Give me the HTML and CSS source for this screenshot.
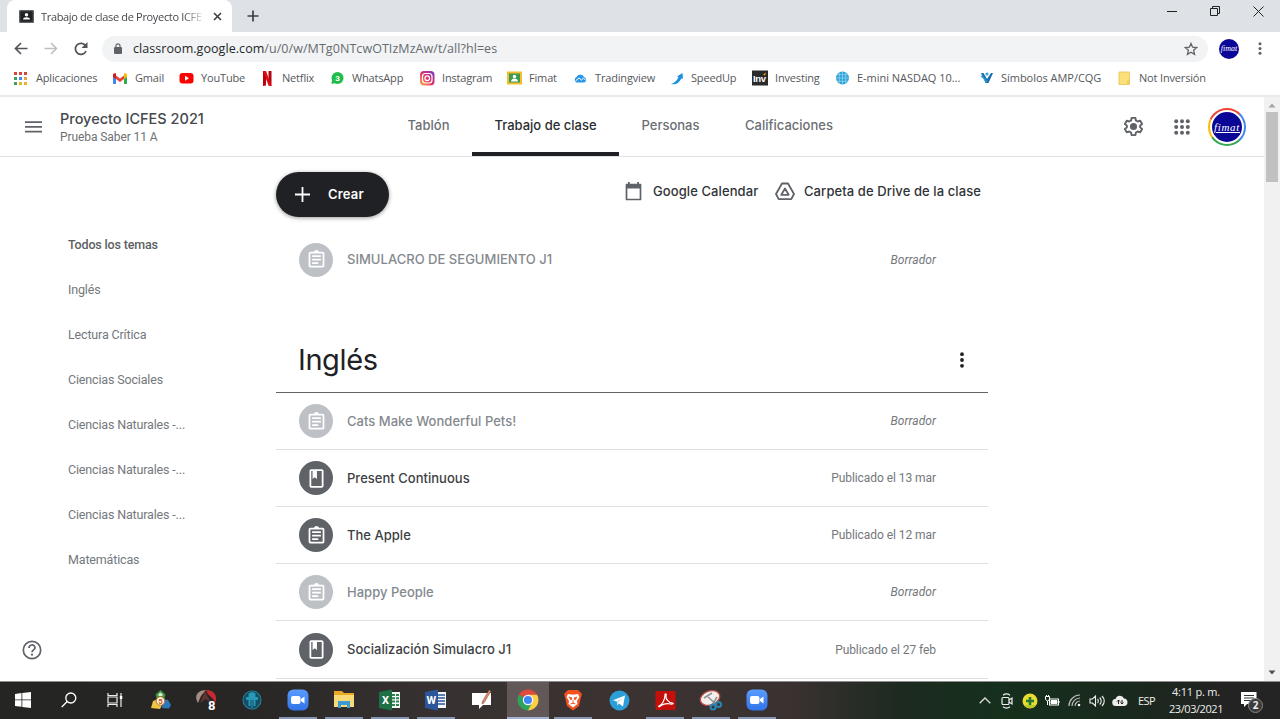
FILE: index.html
```html
<!DOCTYPE html>
<html lang="es">
<head>
<meta charset="utf-8">
<title>Trabajo de clase de Proyecto ICFES 2021</title>
<link rel="stylesheet" href="styles.css">
</head>
<body>
<svg width="0" height="0" class="defs">
  <defs>
    <linearGradient id="ig" x1="0" y1="1" x2="1" y2="0"><stop offset="0" stop-color="#fcb045"/><stop offset=".5" stop-color="#e1306c"/><stop offset="1" stop-color="#6a3ccf"/></linearGradient>
    <linearGradient id="zm" x1="0" y1="0" x2="0" y2="1"><stop offset="0" stop-color="#5a9cff"/><stop offset="1" stop-color="#2f73e8"/></linearGradient>
    <symbol id="assignment" viewBox="0 0 24 24"><path d="M7 15h7v2H7zm0-4h10v2H7zm0-4h10v2H7zm12-4h-4.180C14.400 1.840 13.300 1 12 1c-1.300 0-2.400.840-2.820 2H5c-1.100 0-2 .9-2 2v14c0 1.100.9 2 2 2h14c1.100 0 2-.9 2-2V5c0-1.100-.9-2-2-2zm0 16H5V5h14v14z"/></symbol>
    <symbol id="book" viewBox="0 0 24 24"><path fill-rule="evenodd" d="M18 1.500H6c-1.100 0-2 .9-2 2v17c0 1.100.9 2 2 2h12c1.100 0 2-.9 2-2v-17c0-1.100-.9-2-2-2zM6 3.500h1.500v9l2.500-2 2.500 2v-9H18v17H6z"/></symbol>
    <symbol id="zoomapp" viewBox="0 0 22 22"><rect x=".5" y=".5" width="21" height="21" rx="6" fill="url(#zm)"/><rect x="4" y="7" width="9.500" height="8" rx="2" fill="#fff"/><path d="M14 10l3.500-2.500v7L14 12z" fill="#fff"/></symbol>
  </defs>
</svg>

<div class="tabstrip">
  <div class="tab">
    <svg width="15" height="13" viewBox="0 0 15 13"><rect width="15" height="13" rx="1" fill="#5f6368"/><rect x="1.300" y="1.300" width="12.400" height="10.400" fill="#202124"/><circle cx="7.500" cy="4.800" r="1.700" fill="#fff"/><path d="M4 9.500c0-3 7-3 7 0z" fill="#fff"/></svg>
    <span class="tab-title">Trabajo de clase de Proyecto ICFE</span>
    <svg width="9" height="9" viewBox="0 0 9 9" stroke="#3c4043" stroke-width="1.600"><path d="M1 1l7 7M8 1L1 8"/></svg>
  </div>
  <svg class="newtab" width="12" height="12" viewBox="0 0 12 12" stroke="#3c4043" stroke-width="1.700"><path d="M6 .5v11M.5 6h11"/></svg>
  <div class="winbtns">
    <svg width="10" height="10" viewBox="0 0 10 10" stroke="#222"><path d="M0 5.500h10"/></svg>
    <svg width="10" height="10" viewBox="0 0 10 10" stroke="#222" fill="none"><path d="M.5 2.500h7v7h-7zM2.500 2.500v-2h7v7h-2"/></svg>
    <svg width="11" height="11" viewBox="0 0 11 11" stroke="#222"><path d="M.5.5l10 10M10.500.5l-10 10"/></svg>
  </div>
</div>

<div class="toolbar">
  <svg width="14" height="13" viewBox="0 0 14 13" fill="none" stroke="#505357" stroke-width="1.700"><path d="M13.500 6.500H1.500M7 1L1.500 6.500L7 12"/></svg>
  <svg width="14" height="13" viewBox="0 0 14 13" fill="none" stroke="#bcbec1" stroke-width="1.500"><path d="M.5 6.500h12M7 1l5.500 5.500L7 12"/></svg>
  <svg width="14" height="14" viewBox="0 0 14 14" fill="none" stroke="#505357" stroke-width="1.700"><path d="M12 9a5.500 5.500 0 1 1-.5-5.200"/><path d="M13.500 0v6H7.500z" fill="#505357" stroke="none"/></svg>
  <div class="omnibox">
    <svg width="8" height="11" viewBox="0 0 8 11"><rect y="4" width="8" height="7" rx="1" fill="#5f6368"/><path d="M2 4.500V2.800a2 2 0 0 1 4 0v1.700" fill="none" stroke="#5f6368" stroke-width="1.200"/></svg>
    <span class="url"><b>classroom.google.com</b>/u/0/w/MTg0NTcwOTIzMzAw/t/all?hl=es</span>
    <svg width="14" height="14" viewBox="0 0 24 24" fill="none" stroke="#5f6368" stroke-width="2.200"><path d="M12 2.500l2.800 6.500 7 .6-5.300 4.700 1.600 6.900L12 17.500l-6.100 3.700 1.600-6.900L2.200 9.600l7-.6z"/></svg>
  </div>
  <div class="avatar-sm">fimat</div>
  <svg width="4" height="13" viewBox="0 0 4 13" fill="#5f6368"><circle cx="2" cy="1.800" r="1.500"/><circle cx="2" cy="6.500" r="1.500"/><circle cx="2" cy="11.200" r="1.500"/></svg>
</div>

<div class="bookmarks">
  <div class="bm"><svg viewBox="0 0 16 16"><g fill="#d4463b"><path d="M1 2h3v3H1zM6 2h3v3H6zM11 2h3v3h-3z"/></g><path d="M1 7h3v3H1z" fill="#3f9e57"/><path d="M6 7h3v3H6z" fill="#4285f4"/><path d="M11 7h3v3h-3z" fill="#e8a33c"/><path d="M1 12h3v3H1z" fill="#3f9e57"/><path d="M6 12h3v3H6zM11 12h3v3h-3z" fill="#eeb229"/></svg><span>Aplicaciones</span></div>
  <div class="bm"><svg viewBox="0 0 16 16"><path d="M1 4.500l3 2V14H2a1 1 0 0 1-1-1z" fill="#4285f4"/><path d="M15 4.500l-3 2V14h2a1 1 0 0 0 1-1z" fill="#34a853"/><path d="M4 5.500L8 8.500l4-3V9l-4 3-4-3z" fill="#ea4335"/><path d="M1 4.800C1 3 3 2.800 4 3.600V9L1 7z" fill="#c5221f"/><path d="M15 4.800C15 3 13 2.800 12 3.600V9l3-2z" fill="#fbbc04"/></svg><span>Gmail</span></div>
  <div class="bm"><svg viewBox="0 0 16 16"><rect x="1.500" y="3" width="14" height="10.500" rx="3" fill="#f00"/><path d="M7 5.800v5l4-2.500z" fill="#fff"/></svg><span>YouTube</span></div>
  <div class="bm"><svg viewBox="0 0 16 16"><path d="M4 1h3v14.500l-3 .5zM9.500 1h3v15l-3-.5z" fill="#b1060f"/><path d="M4 1h3l5.500 15-3-.4z" fill="#e50914"/></svg><span>Netflix</span></div>
  <div class="bm"><svg viewBox="0 0 16 16"><circle cx="8.500" cy="8" r="6" fill="#1ebe4b"/><path d="M3 10l-.5 4 4-1z" fill="#1ebe4b"/><text x="8.500" y="11.200" text-anchor="middle" class="wa-count">3</text></svg><span>WhatsApp</span></div>
  <div class="bm"><svg viewBox="0 0 16 16"><rect x="1" y="1" width="14.500" height="14.500" rx="4" fill="url(#ig)"/><rect x="3.500" y="3.500" width="9.500" height="9.500" rx="3" fill="none" stroke="#fff" stroke-width="1.200"/><circle cx="8.250" cy="8.250" r="2.300" fill="none" stroke="#fff" stroke-width="1.200"/></svg><span>Instagram</span></div>
  <div class="bm"><svg viewBox="0 0 16 16"><rect x="1" y="1.500" width="15" height="13" fill="#f3bd2c"/><rect x="3" y="3.500" width="11" height="9" fill="#3c9a52"/><circle cx="8.500" cy="6.500" r="1.700" fill="#fff"/><path d="M5 11.500c0-4 7-4 7 0z" fill="#fff"/></svg><span>Fimat</span></div>
  <div class="bm"><svg viewBox="0 0 16 16"><path d="M4.500 12.500a3 3 0 0 1 0-5.500 4 4 0 0 1 7.500 0 3 3 0 0 1 .5 5.500z" fill="#2b97e8"/><path d="M3.500 11l3.500-3 2.500 2 2-1.800 2 2" fill="none" stroke="#fff"/></svg><span>Tradingview</span></div>
  <div class="bm"><svg viewBox="0 0 16 16"><path d="M3 14c2.500-.8 6-3 7.500-7L9 6.500 14.500 3l.5 6-1.700-.8C12 12 8 15.500 3 14z" fill="#1b8fe0"/></svg><span>SpeedUp</span></div>
  <div class="bm"><svg viewBox="0 0 16 16"><rect width="16" height="15" y=".5" fill="#2b2b2b"/><text x="1" y="12" class="inv">Inv</text><path d="M11 4.500l3-2-1 3z" fill="#f7a600"/></svg><span>Investing</span></div>
  <div class="bm wide"><svg viewBox="0 0 16 16"><circle cx="8.500" cy="8" r="6.500" fill="#2ea3d8"/><path d="M2 8h13M8.500 1.500v13M3 4.700h11M3 11.300h11M5.300 2.500v11M11.700 2.500v11" stroke="#90d2ee" stroke-width=".8"/></svg><span>E-mini NASDAQ 10...</span></div>
  <div class="bm wide"><svg viewBox="0 0 16 16"><path d="M3 3h2.500L9 9l4-6h2l-4.500 10h-3z" fill="#1c6fad"/><path d="M3 6l2.500 2L9 12" fill="none" stroke="#28a3d8" stroke-width="1.400"/><circle cx="9" cy="4" r="1.500" fill="#28a3d8"/></svg><span>Símbolos AMP/CQG</span></div>
  <div class="bm"><svg viewBox="0 0 16 16"><path d="M3 2h10.500v12.500H3z" fill="#fbdf7b" stroke="#e9c24e" stroke-width=".8"/><path d="M11 14.500V11l2.500-2v5.500z" fill="#f0cc5c"/></svg><span>Not Inversión</span></div>
</div>

<div class="page">
  <div class="content">
    <header class="appbar">
      <svg class="menu" width="17" height="12" viewBox="0 0 17 12" fill="#5f6368"><path d="M0 .2h17v1.800H0zM0 5h17v1.800H0zM0 9.800h17v1.800H0z"/></svg>
      <div class="course"><div class="course-name">Proyecto ICFES 2021</div><div class="course-sub">Prueba Saber 11 A</div></div>
      <nav class="tabs"><a>Tablón</a><a class="on">Trabajo de clase</a><a>Personas</a><a>Calificaciones</a></nav>
      <div class="actions">
        <svg width="23" height="23" viewBox="0 0 24 24"><path fill="none" stroke="#5f6368" stroke-width="2" stroke-linejoin="round" d="M10 3h4l.5 2.700 1.900 1.100 2.600-.9 2 3.400-2.100 1.800v1.800l2.100 1.800-2 3.400-2.600-.9-1.900 1.100L14 21h-4l-.5-2.700-1.900-1.100-2.600.9-2-3.400 2.100-1.800v-1.800L3 9.300l2-3.400 2.600.9 1.900-1.100z"/><circle cx="12" cy="12" r="3.700" fill="#5f6368"/></svg>
        <svg width="16" height="16" viewBox="0 0 16 16" fill="#5f6368"><circle cx="2.200" cy="2.200" r="2"/><circle cx="8" cy="2.200" r="2"/><circle cx="13.800" cy="2.200" r="2"/><circle cx="2.200" cy="8" r="2"/><circle cx="8" cy="8" r="2"/><circle cx="13.800" cy="8" r="2"/><circle cx="2.200" cy="13.800" r="2"/><circle cx="8" cy="13.800" r="2"/><circle cx="13.800" cy="13.800" r="2"/></svg>
        <div class="ring"><div class="avatar">fimat</div></div>
      </div>
    </header>
    <div class="body">
      <aside class="topics">
        <a class="sel">Todos los temas</a><a>Inglés</a><a>Lectura Crítica</a><a>Ciencias Sociales</a><a>Ciencias Naturales -...</a><a>Ciencias Naturales -...</a><a>Ciencias Naturales -...</a><a>Matemáticas</a>
        <svg class="help" width="20" height="20" viewBox="0 0 20 20"><circle cx="10" cy="10" r="8.700" fill="none" stroke="#5f6368" stroke-width="1.700"/><path d="M7 8c0-4 6-4 6-.2 0 2-3 2.200-3 4.400" fill="none" stroke="#5f6368" stroke-width="1.700"/><circle cx="10" cy="14.700" r="1.100" fill="#5f6368"/></svg>
      </aside>
      <main>
        <div class="topbar">
          <div class="create"><svg width="15" height="15" viewBox="0 0 15 15" stroke="#fff" stroke-width="1.800"><path d="M7.500 0v15M0 7.500h15"/></svg><span>Crear</span></div>
          <div class="links">
            <svg width="17" height="19" viewBox="0 0 17 19"><path d="M1.500 2.500h14v15h-14z" fill="none" stroke="#5f6368" stroke-width="1.700" stroke-linejoin="round"/><path d="M1 2h15v4.500H1zM3 0h1.800v3H3zM12.200 0H14v3h-1.800z" fill="#5f6368"/></svg>
            <span class="l1">Google Calendar</span>
            <svg width="20" height="19" viewBox="0 0 20 19" fill="none" stroke="#5f6368" stroke-width="1.800" stroke-linejoin="round"><path d="M7 1.500h6l6 10.500-2.700 5.200H3.700L1 12z"/><path d="M10 6.500l3.700 6.300H6.300z"/></svg>
            <span class="l2">Carpeta de Drive de la clase</span>
          </div>
        </div>
        <div class="row first draft"><i class="badge"><svg><use href="#assignment"/></svg></i><span class="name">SIMULACRO DE SEGUMIENTO J1</span><span class="state">Borrador</span></div>
        <div class="topic"><h1>Inglés</h1><svg width="4" height="16" viewBox="0 0 4 16" fill="#202124"><circle cx="2" cy="2.200" r="1.900"/><circle cx="2" cy="8" r="1.900"/><circle cx="2" cy="13.800" r="1.900"/></svg></div>
        <div class="row draft"><i class="badge"><svg><use href="#assignment"/></svg></i><span class="name">Cats Make Wonderful Pets!</span><span class="state">Borrador</span></div>
        <div class="row"><i class="badge"><svg><use href="#book"/></svg></i><span class="name">Present Continuous</span><span class="state">Publicado el 13 mar</span></div>
        <div class="row"><i class="badge"><svg><use href="#assignment"/></svg></i><span class="name">The Apple</span><span class="state">Publicado el 12 mar</span></div>
        <div class="row draft"><i class="badge"><svg><use href="#assignment"/></svg></i><span class="name">Happy People</span><span class="state">Borrador</span></div>
        <div class="row"><i class="badge"><svg><use href="#book"/></svg></i><span class="name">Socialización Simulacro J1</span><span class="state">Publicado el 27 feb</span></div>
      </main>
    </div>
  </div>
  <div class="scroll">
    <svg width="8" height="5" viewBox="0 0 8 5"><path d="M4 .5L7.500 4.500h-7z" fill="#a3a3a3"/></svg>
    <div class="thumb"></div>
    <svg class="down" width="8" height="5" viewBox="0 0 8 5"><path d="M.5.5h7L4 4.500z" fill="#505050"/></svg>
  </div>
</div>

<div class="taskbar">
  <div class="apps">
    <div><svg width="16" height="16" viewBox="0 0 16 16" fill="#fff"><path d="M0 2l6.500-1v6.500H0zM7.300.9L16 0v7.500H7.300zM0 8.300h6.500v6.500L0 14zM7.300 8.300H16V16l-8.700-1z"/></svg></div>
    <div><svg width="16" height="16" viewBox="0 0 16 16" fill="none" stroke="#fff" stroke-width="1.300"><circle cx="9.800" cy="6" r="5"/><path d="M6.200 9.500L.7 15"/></svg></div>
    <div><svg width="16" height="16" viewBox="0 0 16 16" fill="none" stroke="#eee" stroke-width="1.200"><path d="M1 1v2.500h9V1M1 15v-2.500h9V15M1 5h9v6H1zM14 1v14"/><path d="M12.800 4h2.500v3h-2.500z" fill="#fff" stroke="none"/></svg></div>
    <div><svg width="22" height="20" viewBox="0 0 22 20"><path d="M10.500 0l5 4.500-1.500 5h-7l-1.500-5z" fill="#3f9444"/><path d="M8.500 4l2-1.500 2 1.500v2h-4z" fill="#d9ecd0"/><path d="M1 18l2-7 5-2 4 6-2 4z" fill="#eec443"/><path d="M13 9l5 1 3 5-2 3.500-7-.5z" fill="#2c78bd"/><circle cx="10.500" cy="11" r="4.300" fill="#fff6e0" stroke="#c66a28"/><text x="8.300" y="14" class="mt">5</text></svg></div>
    <div><svg width="24" height="22" viewBox="0 0 24 22"><path d="M4 14C-1 6 5 1 12 1L7 7z" fill="#a58b82"/><path d="M6 14L11 2l7 14-6-6z" fill="#5e3431"/><path d="M12 1c9 0 12 7 9 13-1-6-7-6-9-13z" fill="#c52b30"/><text x="14" y="20.500" class="eight">8</text></svg></div>
    <div><svg width="20" height="20" viewBox="0 0 20 20"><circle cx="10" cy="10" r="9" fill="#154e62" stroke="#227c98" stroke-width="1.200"/><path d="M6.500 3.500a6 6 0 0 1 7 0V7H16v3h-2.500v6h-2V10h-1v8h-1v-8h-1v6h-2v-6H4V7h2.500z" fill="#2798b8"/></svg></div>
    <div class="open"><svg width="22" height="22"><use href="#zoomapp"/></svg></div>
    <div class="open"><svg width="22" height="20" viewBox="0 0 22 20"><path d="M1 1h8l2 2h10v14H1z" fill="#e9a927"/><path d="M1 5h20v12H1z" fill="#f9d978"/><path d="M5 11h12v7h-3v-3H8v3H5z" fill="#3b9ad3"/></svg></div>
    <div class="open"><svg width="22" height="22" viewBox="0 0 22 22"><path d="M11 3h10v16H11z" fill="#f3f8f4"/><path d="M13 5h3v2h-3zm4 0h3v2h-3zm-4 3.300h3v2h-3zm4 0h3v2h-3zm-4 3.300h3v2h-3zm4 0h3v2h-3zM13 15h3v2h-3zm4 0h3v2h-3z" fill="#2a8250"/><path d="M0 3l13-2.500v21L0 19z" fill="#1e7145"/><text x="3" y="15" class="office">X</text></svg></div>
    <div class="open"><svg width="22" height="22" viewBox="0 0 22 22"><path d="M11 3h10v16H11z" fill="#f3f6fb"/><path d="M13 6h7M13 9h7M13 12h7M13 15h7" stroke="#2b579a" stroke-width="1.300"/><path d="M0 3l13-2.500v21L0 19z" fill="#2b579a"/><text x="1.500" y="15" class="office">W</text></svg></div>
    <div><svg width="22" height="20" viewBox="0 0 22 20"><path d="M1 3h19v12h-8l-4 4v-4H1z" fill="#fff"/><path d="M18 0l2 1-7 12-2 1v-2z" fill="#df8762" stroke="#5b4640" stroke-width=".4"/></svg></div>
    <div class="open active"><svg width="22" height="22" viewBox="0 0 22 22"><path d="M1.900 5.800A10.500 10.500 0 0 1 20.100 5.800L11 11z" fill="#df4a3e"/><path d="M20.100 5.800A10.500 10.500 0 0 1 11 21.500L11 11z" fill="#fdd044"/><path d="M11 21.500A10.500 10.500 0 0 1 1.900 5.800L11 11l4 3z" fill="#2da45c"/><path d="M11 5.800h9L15 13z" fill="#fdd044"/><circle cx="11" cy="11" r="5.200" fill="#fff"/><circle cx="11" cy="11" r="4.100" fill="#4285f4"/></svg></div>
    <div class="open"><svg width="20" height="22" viewBox="0 0 20 22"><path d="M5 1h10l2 2 2 2-1 3-2 9-6 4.500L4 17 2 8 1 5l2-2z" fill="#f4511e"/><path d="M5 5l3 .5h4l3-.5 1.500 3-2.500 4 .5 3-4.500 3.500-4.500-3.500.5-3-2.500-4z" fill="#fff"/><path d="M6 8l3 1-1 2zM14 8l-3 1 1 2zM10 11v4M7.500 15l2.500-1 2.500 1" fill="#f4511e" stroke="#f4511e" stroke-width=".8"/></svg></div>
    <div><svg width="21" height="21" viewBox="0 0 21 21"><circle cx="10.500" cy="10.500" r="10" fill="#2d9fd8"/><path d="M4 10.300L16 5.500l-2 11-4-3-1.500 2-.7-4z" fill="#fff"/><path d="M8 11.500l5.500-4-4 5-.7 2.500z" fill="#b8d9ec"/></svg></div>
    <div class="open"><svg width="21" height="21" viewBox="0 0 21 21"><rect x=".5" y="1" width="20" height="19" rx="1" fill="#c3100b"/><path d="M4 16c3-1 6-6 6-11 0-2 2-1 1 1-.5 3 3 7 6.500 7 1.500.5 0 1.500-1.500 1-4-1-7-.5-10 1.500-1.500 1.500-3 1.500-2 .5z" fill="none" stroke="#fff" stroke-width="1.200"/></svg></div>
    <div class="open"><svg width="24" height="22" viewBox="0 0 24 22"><ellipse cx="11" cy="9" rx="10" ry="7" transform="rotate(-20 11 9)" fill="#f4efed" stroke="#b94a43" stroke-width="1.300"/><path d="M5 9l8-5M9 8l9 8M18 8l-5 8" stroke="#8c9194" stroke-width="1.500"/><circle cx="19.500" cy="15.500" r="2.500" fill="none" stroke="#2a84b4" stroke-width="2"/><circle cx="14" cy="18" r="2.500" fill="none" stroke="#2a84b4" stroke-width="2"/></svg></div>
    <div class="open"><svg width="22" height="22"><use href="#zoomapp"/></svg></div>
  </div>
  <div class="tray">
    <div class="tray-icons">
      <svg width="12" height="7" viewBox="0 0 12 7" fill="none" stroke="#ddd" stroke-width="1.300"><path d="M.7 6.300L6 1l5.300 5.300"/></svg>
      <svg width="12" height="16" viewBox="0 0 12 16" fill="none" stroke="#eee" stroke-width="1.200"><rect x="1" y="4.500" width="7" height="7" rx="1"/><path d="M8 7l3-2v6L8 9M2 2.200c2-1.500 5-1.500 7 0M2 13.800c2 1.500 5 1.500 7 0"/></svg>
      <svg width="16" height="16" viewBox="0 0 16 16"><circle cx="8" cy="8" r="7.500" fill="#eadb31"/><path d="M2 12a7.500 7.500 0 0 0 12 0z" fill="#b6c728"/><path d="M8 4v8M4 8h8" stroke="#237836" stroke-width="2.600"/></svg>
      <svg width="15" height="12" viewBox="0 0 15 12" fill="none" stroke="#fff"><rect x="4.500" y="4" width="9" height="6"/><path d="M6 5.500h6v3H6zM14 6v2" fill="#fff"/><path d="M.5 1.500h4v3l-2 1.500-2-1.500zM2.500 6v4M1.500 0v2M3.500 0v2"/></svg>
      <svg width="13" height="13" viewBox="0 0 13 13" fill="none" stroke="#bbb" stroke-width="1.200"><path d="M1 12A11 11 0 0 1 12 1M4 12a8 8 0 0 1 8-8M7 12a5 5 0 0 1 5-5"/><circle cx="11" cy="11" r="1.300" fill="#fff" stroke="none"/></svg>
      <svg width="16" height="14" viewBox="0 0 16 14" fill="none" stroke="#eee" stroke-width="1.100"><path d="M1 5h2.500l3-3v10l-3-3H1zM8.500 5c1 1 1 3 0 4M10.700 3.500c2 2 2 5 0 7M13 2c3 3 3 7 0 10"/></svg>
      <svg width="16" height="12" viewBox="0 0 16 12"><path d="M4 11a3.500 3.500 0 0 1-.5-7A4.500 4.500 0 0 1 12 3.500 3.800 3.800 0 0 1 12.500 11z" fill="#eee"/><path d="M6.500 9V5M5 6.500L6.500 5 8 6.500M10 5v4M8.500 7.500L10 9l1.500-1.500" stroke="#222" fill="none"/></svg>
    </div>
    <span class="lang">ESP</span>
    <div class="clock"><span>4:11 p. m.</span><span class="date">23/03/2021</span></div>
    <div class="notif"><svg width="16" height="16" viewBox="0 0 16 16"><path d="M0 0h15.500v12H6l-3 3v-3H0z" fill="#fff"/><path d="M3 3.500h10M3 6h10M3 8.500h7" stroke="#333"/></svg><b>2</b></div>
  </div>
</div>
</body>
</html>
```

FILE: styles.css
```css
* { box-sizing: border-box; }
body { margin: 0; width: 1280px; height: 719px; overflow: hidden; display: grid; grid-template-rows: 32px 32px 33px 584px 38px; background: #fff; font-family: "Open Sans", "Noto Sans", sans-serif; }
svg { display: block; flex: none; }
.defs { position: absolute; }

.tabstrip { background: #dee1e6; display: flex; align-items: flex-end; }
.tab { margin-left: 7px; width: 225px; height: 32px; background: #fff; border-radius: 8px 8px 0 0; display: flex; align-items: center; padding: 0 10px 0 12px; }
.tab-title { margin-left: 7px; width: 165px; white-space: nowrap; font-size: 11px; letter-spacing: -.33px; color: #45484c; -webkit-mask-image: linear-gradient(90deg, #000 86%, transparent); mask-image: linear-gradient(90deg, #000 86%, transparent); }
.tab > svg:last-child { margin-left: 7px; }
.newtab { margin: 0 0 10px 15px; }
.winbtns { margin-left: auto; display: flex; gap: 33px; align-items: center; height: 27px; padding: 0 16px 10px 0; height: 32px; }

.toolbar { display: flex; align-items: center; padding: 1px 18px 0 14px; }
.toolbar > svg:nth-child(2) { margin-left: 16px; }
.toolbar > svg:nth-child(3) { margin-left: 16px; }
.omnibox { margin-left: 14px; width: 1106px; height: 26px; border-radius: 13px; background: #f1f3f4; display: flex; align-items: center; padding: 0 10px 0 12px; }
.url { flex: 1; margin-left: 11px; font-size: 12.5px; letter-spacing: .06px; color: #676b70; white-space: nowrap; }
.url b { font-weight: 400; color: #25272a; }
.avatar-sm, .avatar { background: #0a0796; color: #fff; border-radius: 50%; font-family: "Liberation Serif", serif; font-style: italic; display: grid; place-items: center; }
.avatar-sm { margin-left: 11px; width: 20px; height: 20px; font-size: 8px; }
.toolbar > svg:last-child { margin-left: auto; }

.bookmarks { display: grid; grid-template-columns: 99px 66px 81px 70px 90px 87px 66px 96px 84px 82px 144px 138px 120px; padding: 0 0 4px 13px; align-items: center; border-bottom: 2px solid #e9eaeb; }
.bm { display: flex; align-items: center; gap: 7px; font-size: 11px; letter-spacing: -.17px; color: #55585c; white-space: nowrap; }
.wide { letter-spacing: -.03px; }
.bm svg { width: 16px; height: 16px; }
.wa-count { font: 700 8px Roboto, sans-serif; fill: #fff; }
.inv { font: 700 9.500px "Liberation Sans", sans-serif; fill: #fff; letter-spacing: -.4px; }

.page { display: flex; overflow: hidden; }
.content { width: 1264px; }
.appbar { height: 60px; border-bottom: 1px solid #dfe1e3; display: flex; }
.menu { margin: 24px 0 0 25px; }
.course { margin-left: 18px; width: 325px; padding-top: 12px; }
.course-name { font: 500 14.500px/19px Inter, sans-serif; color: #45494d; }
.course-sub { font: 400 12px/18px Roboto, sans-serif; letter-spacing: -.08px; color: #6e7276; }
.tabs { display: grid; grid-template-columns: 87px 147px 103px 134px; font: 500 13px/57px Inter, sans-serif; color: #6b6f74; text-align: center; }
.tabs .on { color: #2b2d30; height: 59px; background: linear-gradient(#202124, #202124) bottom/100% 4px no-repeat; }
.actions { margin-left: auto; display: flex; align-items: center; padding-right: 18px; }
.actions svg + svg { margin-left: 29px; }
.ring { margin-left: 18px; width: 38px; height: 38px; border-radius: 50%; padding: 2px; background: conic-gradient(from 45deg, #4285f4 0 90deg, #34a853 90deg 190deg, #fbbc04 190deg 250deg, #ea4335 250deg); }
.avatar { width: 34px; height: 34px; border: 2px solid #fff; font-size: 11px; text-decoration: underline; letter-spacing: .7px; }

.body { display: grid; grid-template-columns: 276px 712px; }
.topics { padding: 65px 0 0 68px; font: 400 12.500px/45px Roboto, sans-serif; letter-spacing: -.16px; color: #74787c; }
.topics a { display: block; height: 45px; }
.topics .sel { font-weight: 500; color: #5b5f63; }
.help { margin: 58px 0 0 -46px; }
main { padding-top: 15px; }
.topbar { height: 45px; display: flex; justify-content: space-between; }
.create { width: 113px; height: 45px; border-radius: 23px; background: #202124; color: #fff; display: flex; align-items: center; padding-left: 19px; gap: 18px; font: 600 13px Inter, sans-serif; box-shadow: 0 1px 4px rgba(0,0,0,.4); }
.create span { letter-spacing: .2px; padding-bottom: 1px; }
.links { height: 39px; width: 363px; display: flex; align-items: center; font: 500 13px Inter, sans-serif; letter-spacing: .09px; color: #303337; white-space: nowrap; }
.links span { padding-bottom: 1px; }
.l1 { margin-left: 11px; width: 122px; }
.l2 { margin-left: 9px; }
.row { height: 57.100px; border-bottom: 1px solid #e0e0e0; display: flex; align-items: center; padding: 0 52px 0 23px; }
.first { margin-top: 14px; border: 0; }
.badge { width: 34px; height: 34px; border-radius: 50%; background: #5f6368; display: grid; place-items: center; }
.badge svg { width: 21px; height: 21px; fill: #fff; }
.draft .badge { background: #bdc1c6; }
.name { margin-left: 14px; padding-bottom: 1px; flex: 1; font: 500 13px Inter, sans-serif; letter-spacing: .02px; color: #3c4043; }
.draft .name { color: #84898e; }
.state { font: 400 12px Roboto, sans-serif; letter-spacing: -.06px; color: #74787c; }
.draft .state { font-style: italic; letter-spacing: .05px; }
.topic { margin-top: 39px; height: 66px; border-bottom: 1px solid #5f6368; display: flex; align-items: center; justify-content: space-between; padding: 0 24px 0 22px; }
.topic h1 { margin: 0; font: 400 29px Inter, sans-serif; letter-spacing: -.4px; color: #202124; }

.scroll { width: 16px; background: #f1f1f1; display: flex; flex-direction: column; align-items: center; padding: 6px 0; }
.thumb { width: 12px; height: 70px; margin-top: 4px; background: #c1c1c1; }
.down { margin-top: auto; }

.taskbar { border-top: 1px solid #8d8d8d; display: flex; justify-content: space-between; background: linear-gradient(90deg, #252524 0, #272625 240px, #363130 420px, #3b3332 650px, #3a3131 790px, #1d2a20 900px, #15301c 1000px, #1a281d 1140px, #222322 1220px, #242424); }
.apps { display: flex; }
.apps > div { width: 45.880px; height: 37px; display: grid; place-items: center; padding-bottom: 1px; }
.apps .open { background: linear-gradient(#8796b4, #8796b4) 50% 100%/38px 2px no-repeat; }
.apps .active { background: linear-gradient(#a1b4d8, #a1b4d8) 50% 100%/42px 2px no-repeat, linear-gradient(#625857, #625857) 50%/42px 100% no-repeat; }
.mt { font: 700 8px Roboto, sans-serif; fill: #c25a20; }
.eight { font: 700 13px Roboto, sans-serif; fill: #fff; }
.office { font: 700 11px Roboto, sans-serif; fill: #fff; }
.tray { display: flex; align-items: center; padding-right: 17px; color: #eee; font-size: 11px; }
.tray-icons { display: grid; grid-template-columns: repeat(7, 22.500px); justify-items: center; align-items: center; }
.lang { margin-left: 7px; width: 18px; letter-spacing: -.6px; }
.clock { margin-left: 11px; display: flex; flex-direction: column; width: 58px; text-align: center; line-height: 16.500px; letter-spacing: -.22px; white-space: nowrap; }
.date { letter-spacing: -.42px; }
.notif { position: relative; margin-left: 16px; width: 22px; height: 18px; }
.notif b { position: absolute; left: 7px; top: 6px; width: 15px; height: 15px; border-radius: 50%; background: #3a3a3a; border: 1px solid #888; font: 700 10px/13px "Open Sans", sans-serif; text-align: center; }
```
